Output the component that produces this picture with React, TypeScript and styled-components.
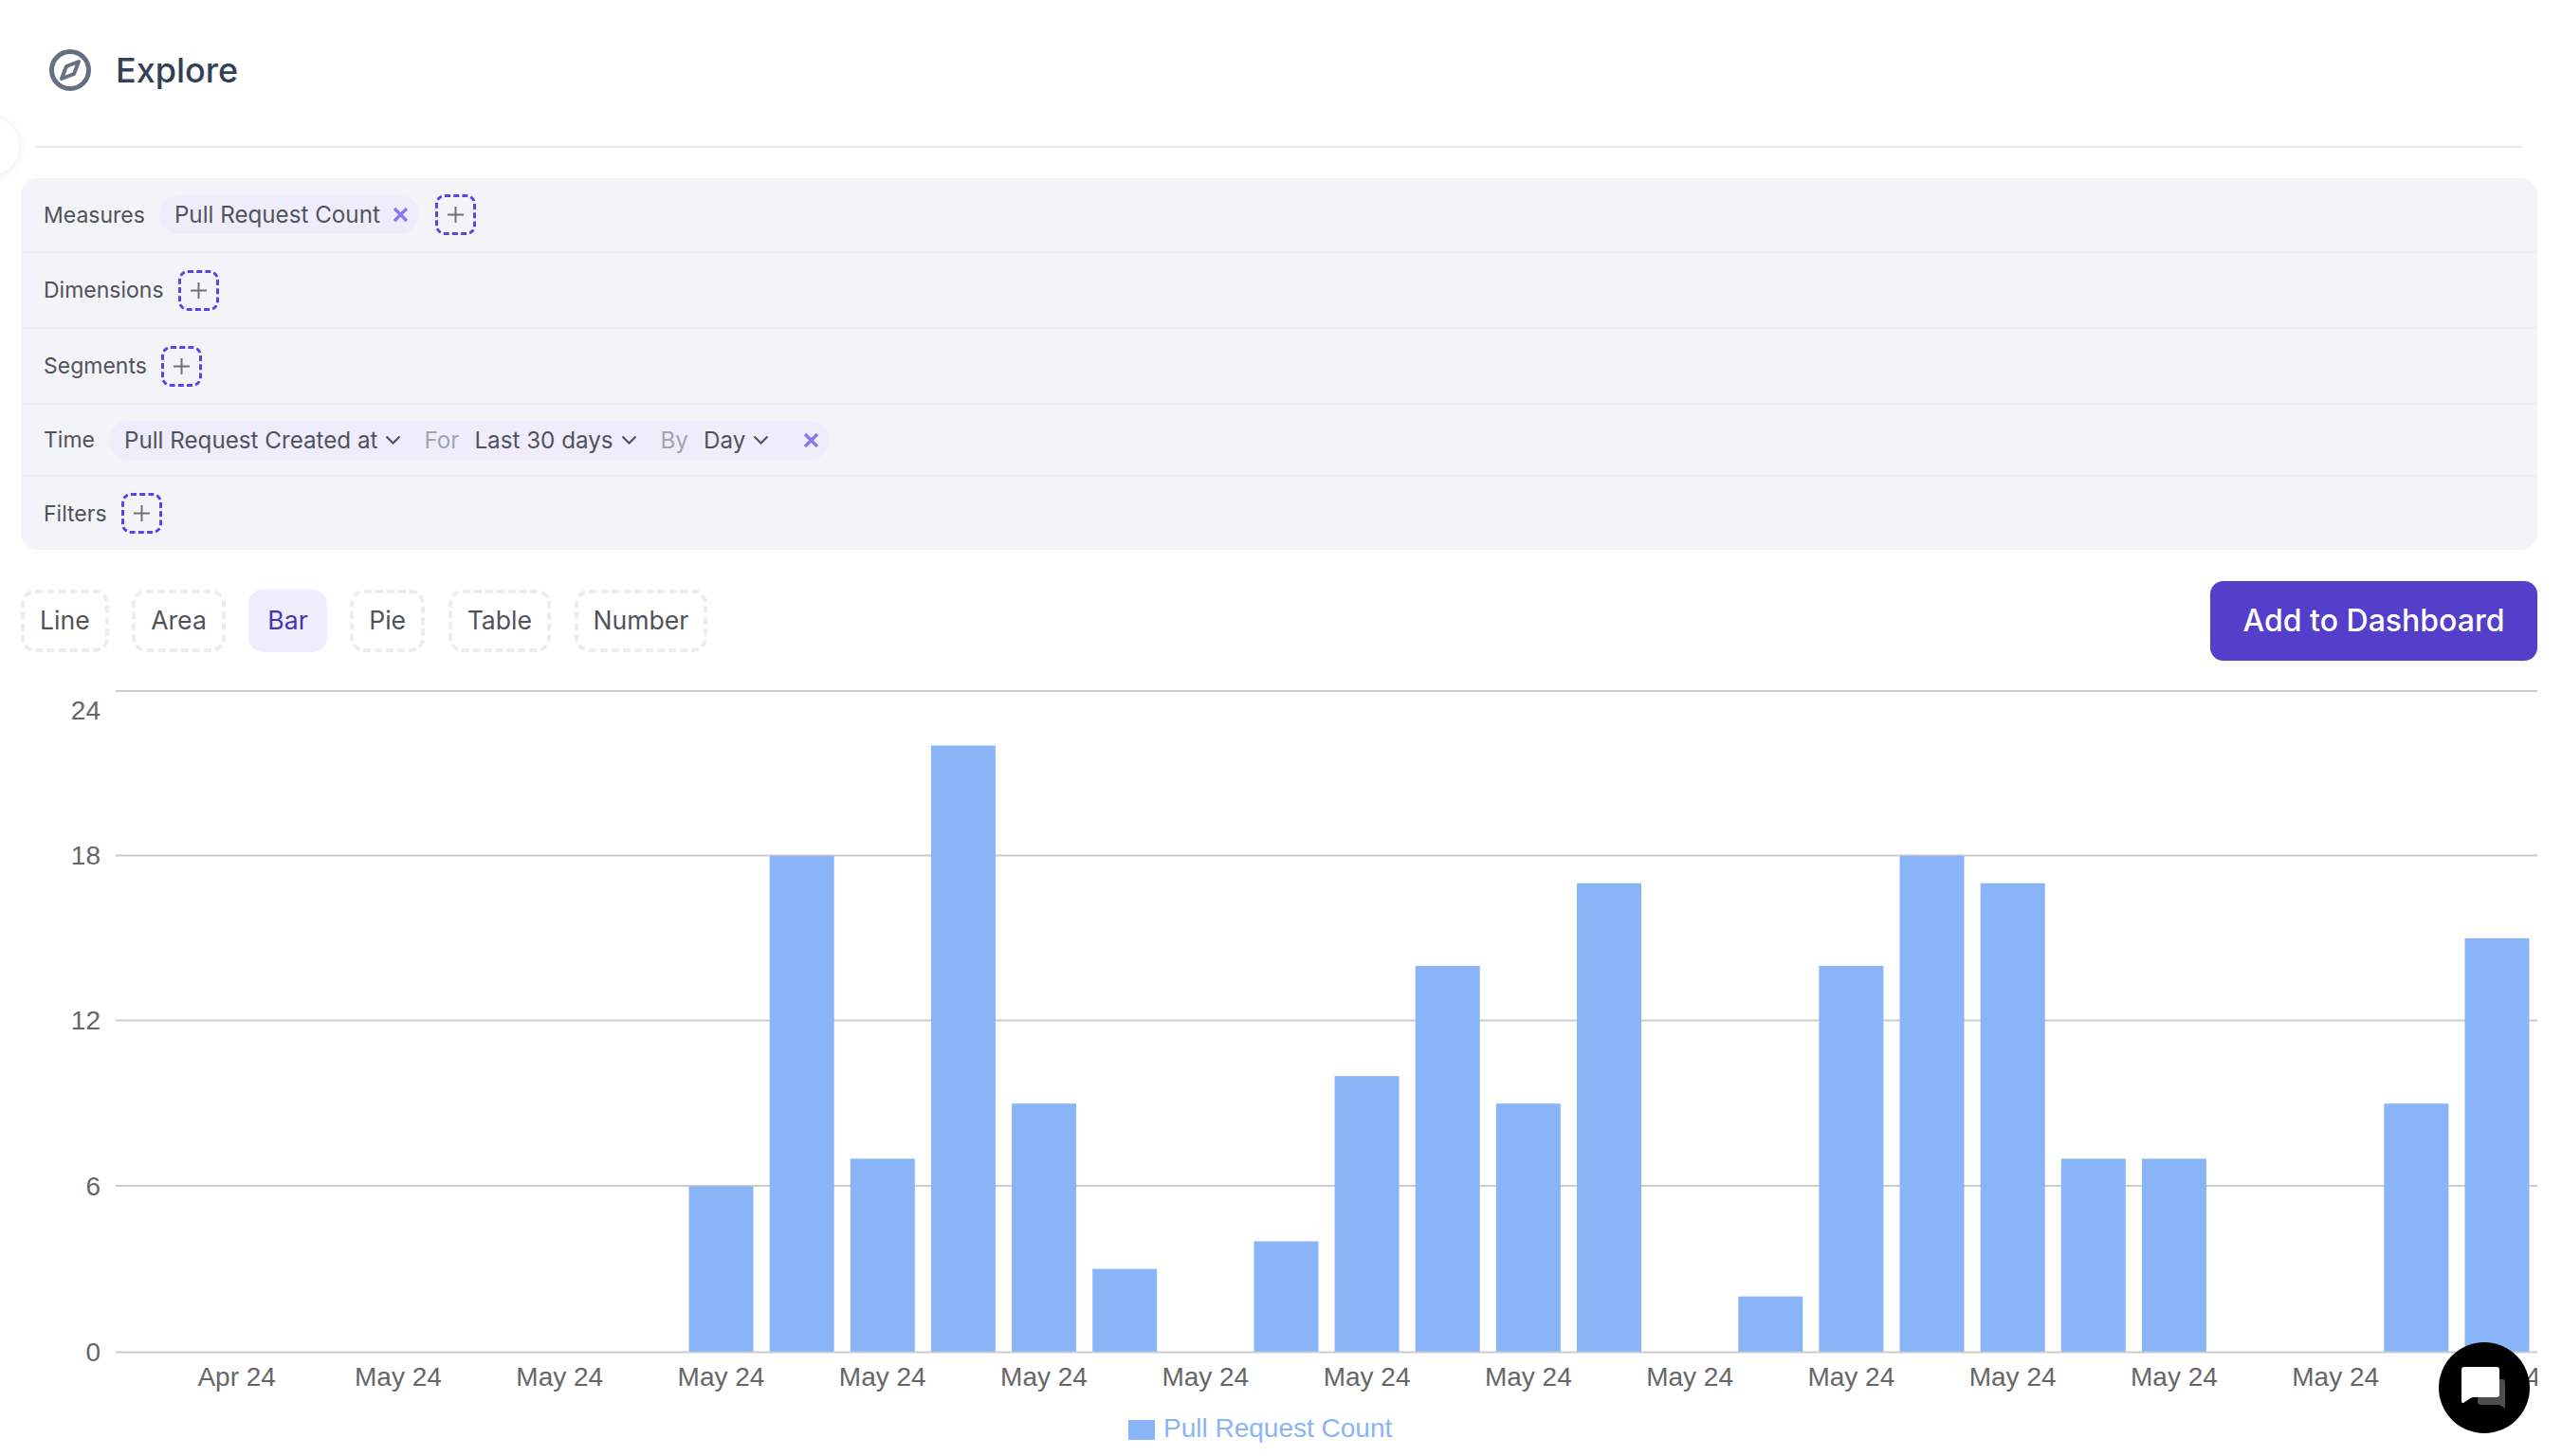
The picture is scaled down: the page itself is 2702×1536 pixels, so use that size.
import React from "react";
import styled, { createGlobalStyle } from "styled-components";

const GlobalStyle = createGlobalStyle`
  html, body { margin: 0; padding: 0; background: #fff; }
  body { width: 2702px; height: 1536px; overflow: hidden; font-family: Inter, "Liberation Sans", sans-serif; }
  * { box-sizing: border-box; }
`;

const Page = styled.div`
  position: relative;
  width: 2702px;
  height: 1536px;
  overflow: hidden;
  background: #fff;
`;
const SideHandle = styled.div`
  position: absolute;
  left: -42px;
  top: 123px;
  width: 62px;
  height: 62px;
  border-radius: 50%;
  background: #fff;
  box-shadow: 0 1px 10px rgba(0, 0, 0, 0.09);
`;
const Header = styled.header`
  display: flex;
  align-items: center;
  gap: 26px;
  margin: 0 42px 0 38px;
  padding: 52px 14px 58px;
  border-bottom: 2px solid #e7e8ea;
`;
const Title = styled.h1`
  margin: 0;
  font-size: 36px;
  line-height: 44px;
  font-weight: 500;
  color: #334155;
`;
const Main = styled.main`
  padding: 32px 26px 0 22px;
`;
const QueryPanel = styled.section`
  background: #f3f4f8;
  border-radius: 18px;
  height: 392px;
  display: flex;
  flex-direction: column;
`;
const QueryRow = styled.div<{ $h: number; $last?: boolean }>`
  height: ${(p) => p.$h}px;
  flex: none;
  display: flex;
  align-items: center;
  gap: 15px;
  padding-left: 24px;
  border-bottom: ${(p) => (p.$last ? "none" : "2px solid #eeeff3")};
`;
const RowLabel = styled.span`
  font-size: 23px;
  color: #52525b;
`;
const Pill = styled.div`
  display: flex;
  align-items: center;
  height: 41px;
  padding: 0 11px 0 16px;
  border-radius: 21px;
  background: #efedfb;
  font-size: 24.2px;
  color: #52525b;
  white-space: nowrap;
`;
const Muted = styled.span`
  color: #a1a5b0;
  margin: 0 16px 0 24px;
`;
const SecondMuted = styled(Muted)`
  margin-left: 25px;
`;
const CloseIcon = styled.svg<{ $ml: number }>`
  width: 17px;
  height: 17px;
  margin-left: ${(p) => p.$ml}px;
  flex: none;
`;
const Chevron = styled.svg`
  width: 17px;
  height: 10px;
  margin-left: 8px;
  flex: none;
`;
const AddBox = styled.button`
  width: 43px;
  height: 43px;
  padding: 0;
  display: flex;
  align-items: center;
  justify-content: center;
  background: transparent;
  border: 3px dashed #5f40e4;
  border-radius: 10px;
`;
const AddWithGap = styled(AddBox)`
  margin-left: 2px;
`;
const Toolbar = styled.div`
  display: flex;
  align-items: center;
  justify-content: space-between;
  margin-top: 33px;
`;
const ChartTypes = styled.div`
  display: flex;
  gap: 24.5px;
`;
const ChartType = styled.button<{ $active?: boolean }>`
  height: 66px;
  padding: 0 16px 2px;
  border-radius: 15px;
  border: 4px ${(p) => (p.$active ? "solid #efedfb" : "dashed #ecedf1")};
  background: ${(p) => (p.$active ? "#efedfb" : "#fff")};
  color: ${(p) => (p.$active ? "#4a32b0" : "#52525b")};
  font: 400 26.6px Inter, sans-serif;
`;
const AddDashboard = styled.button`
  width: 345px;
  height: 84px;
  padding: 0 0 2px;
  border: none;
  border-radius: 14px;
  background: #533fc9;
  color: #fff;
  font: 500 32px Inter, sans-serif;
  box-shadow: 0 1px 3px rgba(0, 0, 0, 0.08);
`;
const ChartSvg = styled.svg`
  display: block;
  margin-top: 20px;
  width: 2654px;
  height: 819px;
  font-family: "Liberation Sans", Arial, sans-serif;
`;
const AxisText = styled.text`
  font-size: 28px;
  fill: #666;
`;
const LegendText = styled.text`
  font-size: 28px;
  fill: #8ab4f8;
`;
const ChatButton = styled.button`
  position: absolute;
  right: 34px;
  bottom: 24px;
  width: 96px;
  height: 96px;
  padding: 0;
  border: none;
  border-radius: 50%;
  background: #000;
  display: flex;
  align-items: center;
  justify-content: center;
`;

const Plus = () => (
  <svg width="17" height="17" viewBox="0 0 17 17" fill="none" stroke="#707076" strokeWidth="2">
    <path d="M8.5 0v17M0 8.5h17" />
  </svg>
);
const Close = ({ ml }: { ml: number }) => (
  <CloseIcon $ml={ml} viewBox="0 0 17 17" fill="none" stroke="#8a76ee" strokeWidth="3.2">
    <path d="M2 2l13 13M15 2L2 15" />
  </CloseIcon>
);
const Down = () => (
  <Chevron viewBox="0 0 17 10" fill="none" stroke="#52525b" strokeWidth="2.2">
    <path d="M1.5 1.5L8.5 8.5L15.5 1.5" />
  </Chevron>
);

const VALUES = [0, 0, 0, 0, 0, 0, 0, 6, 18, 7, 22, 9, 3, 0, 4, 10, 14, 9, 17, 0, 2, 14, 18, 17, 7, 7, 0, 0, 9, 15];
const LEFT = 122;
const RIGHT = 2676;
const ZERO = 1426.5;
const TOP = 729;
const BAND = (RIGHT - LEFT) / 30;
const UNIT = (ZERO - TOP) / 24;
const TYPES = ["Line", "Area", "Bar", "Pie", "Table", "Number"];
const YTICKS: [number, number, number][] = [
  [24, 729, 759],
  [18, 902.5, 912],
  [12, 1076.5, 1086],
  [6, 1251, 1261],
  [0, 1426.5, 1436],
];

export default function App() {
  return (
    <Page>
      <GlobalStyle />
      <SideHandle />
      <Header>
        <svg width="44" height="44" viewBox="0 0 44 44" fill="none" stroke="#667085">
          <circle cx="22" cy="22" r="19.5" strokeWidth="5" />
          <path d="M31 13L26 26L13 31L18 18Z" strokeWidth="4" strokeLinejoin="round" />
        </svg>
        <Title>Explore</Title>
      </Header>
      <Main>
        <QueryPanel>
          <QueryRow $h={79}>
            <RowLabel>Measures</RowLabel>
            <Pill>
              Pull Request Count
              <Close ml={13} />
            </Pill>
            <AddWithGap aria-label="Add measure">
              <Plus />
            </AddWithGap>
          </QueryRow>
          <QueryRow $h={80}>
            <RowLabel>Dimensions</RowLabel>
            <AddBox aria-label="Add dimension">
              <Plus />
            </AddBox>
          </QueryRow>
          <QueryRow $h={80}>
            <RowLabel>Segments</RowLabel>
            <AddBox aria-label="Add segment">
              <Plus />
            </AddBox>
          </QueryRow>
          <QueryRow $h={76}>
            <RowLabel>Time</RowLabel>
            <Pill>
              Pull Request Created at
              <Down />
              <Muted>For</Muted>
              Last 30 days
              <Down />
              <SecondMuted>By</SecondMuted>
              Day
              <Down />
              <Close ml={36} />
            </Pill>
          </QueryRow>
          <QueryRow $h={77} $last>
            <RowLabel>Filters</RowLabel>
            <AddBox aria-label="Add filter">
              <Plus />
            </AddBox>
          </QueryRow>
        </QueryPanel>
        <Toolbar>
          <ChartTypes>
            {TYPES.map((t) => (
              <ChartType key={t} $active={t === "Bar"}>
                {t}
              </ChartType>
            ))}
          </ChartTypes>
          <AddDashboard>Add to Dashboard</AddDashboard>
        </Toolbar>
        <ChartSvg viewBox="22 717 2654 819">
          {YTICKS.map(([v, y]) => (
            <line key={v} x1={LEFT} x2={RIGHT} y1={y} y2={y} stroke="#ccc" strokeWidth="2" />
          ))}
          {YTICKS.map(([v, , base]) => (
            <AxisText key={v} x={106} y={base} textAnchor="end">
              {v}
            </AxisText>
          ))}
          {VALUES.map((v, i) =>
            v > 0 ? (
              <rect
                key={i}
                x={LEFT + BAND * i + 8.6}
                y={ZERO - v * UNIT - 0.7}
                width={68}
                height={v * UNIT}
                fill="#8ab4f8"
              />
            ) : null
          )}
          {VALUES.map((_, i) =>
            i % 2 === 1 ? (
              <AxisText key={i} x={LEFT + BAND * (i + 0.5)} y={1462} textAnchor="middle">
                {i === 1 ? "Apr 24" : "May 24"}
              </AxisText>
            ) : null
          )}
          <rect x={1190} y={1498} width={28} height={21} fill="#8ab4f8" />
          <LegendText x={1227} y={1516}>
            Pull Request Count
          </LegendText>
        </ChartSvg>
      </Main>
      <ChatButton aria-label="Open chat">
        <svg width="48" height="44" viewBox="0 0 48 44">
          <path
            d="M18 13H43a3 3 0 0 1 3 3V44l-5-3.5a3 3 0 0 0-2-.5H20a3 3 0 0 1-3-3Z"
            fill="#4d4d4d"
          />
          <path
            d="M3 0H37a3 3 0 0 1 3 3V29a3 3 0 0 1-3 3H12a7 7 0 0 0-4 2L2 38a2 2 0 0 1-2-1V3a3 3 0 0 1 3-3Z"
            fill="#fff"
          />
        </svg>
      </ChatButton>
    </Page>
  );
}
